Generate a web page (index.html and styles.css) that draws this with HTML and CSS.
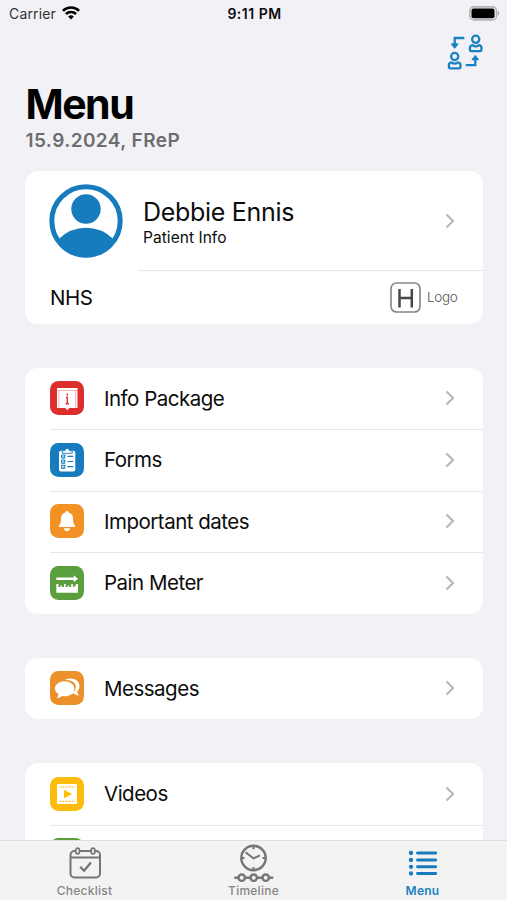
FILE: index.html
```html
<!DOCTYPE html>
<html lang="en">
<head>
    <meta charset="UTF-8">
    <meta name="viewport" content="width=device-width, initial-scale=1.0">
    <title>Menu</title>
    <link rel="stylesheet" href="styles.css">
</head>
<body>
    <div class="status-bar">
        <div class="carrier">
            <span>Carrier</span>
            <svg width="18" height="14" viewBox="0 0 18 14">
                <g fill="none" stroke="#000" stroke-width="2.5">
                    <path d="M.9 4.9a11.5 11.5 0 0 1 16.2 0"/>
                    <path d="M3.9 8a7.2 7.2 0 0 1 10.2 0"/>
                </g>
                <path d="M9 13.6l-2.9-3a4.1 4.1 0 0 1 5.8 0z"/>
            </svg>
        </div>
        <div class="time">9:11 PM</div>
        <div class="battery">
            <svg width="31" height="15" viewBox="0 0 31 15">
                <rect x=".9" y=".9" width="26.6" height="13" rx="4" fill="none" stroke="#b4b4b6" stroke-width="1.6"/>
                <rect x="2.5" y="2.5" width="23" height="9.8" rx="2"/>
                <path d="M28.7 5v4.6c2-.7 2-3.9 0-4.6z" fill="#aaaaac"/>
            </svg>
        </div>
    </div>

    <div class="toolbar">
        <svg width="36" height="36" viewBox="0 0 36 36" fill="none" stroke="#1a82c4" stroke-width="2.3">
            <g id="person">
                <circle cx="28.7" cy="5.3" r="3.6"/>
                <path d="M25.6 11.1c-1.900.3-2.700 1.400-2.700 3v1.500q0 1.500 1.500 1.500h8.600q1.500 0 1.500-1.500v-1.500c0-1.600-.8-2.700-2.700-3q-3.100 2.600-6.200 0z" stroke-linejoin="round"/>
            </g>
            <use href="#person" x="-21" y="17.200"/>
            <path d="M17.300 4H7.700v6"/>
            <path d="M4.800 10.100h5.800l-2.900 3.700z" fill="#1a82c4" stroke-width="1.500" stroke-linejoin="round"/>
            <path d="M18.700 31.200h9.600v-6"/>
            <path d="M25.400 25.600h5.800l-2.900-3.700z" fill="#1a82c4" stroke-width="1.500" stroke-linejoin="round"/>
        </svg>
    </div>

    <div class="heading">
        <h1>Menu</h1>
        <p>15.9.2024, FReP</p>
    </div>

    <div class="content">
        <div class="card">
            <a class="profile">
                <svg class="avatar" width="74" height="74" viewBox="0 0 74 74">
                    <circle cx="37" cy="37" r="34.2" fill="#fff" stroke="#167cbd" stroke-width="5"/>
                    <circle cx="37" cy="25" r="14.7" fill="#167cbd"/>
                    <path d="M10 54.7q11.5-11 27-11t27 11A34 34 0 0 1 37 72 34 34 0 0 1 10 54.7z" fill="#167cbd"/>
                </svg>
                <div class="profile-text">
                    <div class="name">Debbie Ennis</div>
                    <div class="sub">Patient Info</div>
                </div>
                <svg class="chevron" width="10" height="16" viewBox="0 0 10 16"><path d="M1.5 1.5L8 8l-6.5 6.5"/></svg>
            </a>
            <div class="hospital">
                <span class="hospital-name">NHS</span>
                <svg width="31" height="31" viewBox="0 0 31 31">
                    <rect x="1" y="1" width="29" height="29" rx="5.5" fill="none" stroke="#858585" stroke-width="1.6"/>
                    <path d="M9.5 7v18.500M21.800 7v18.500M9.500 16h12.300" stroke="#484848" stroke-width="2.500"/>
                </svg>
                <span class="logo-text">Logo</span>
            </div>
        </div>

        <div class="card">
            <a class="row">
                <svg class="icon red" viewBox="0 0 34 34">
                    <path d="M7 7h20.5v20h-8.2l-2 2.200-2-2.200H7z" fill="#fff"/>
                    <path d="M7 9.500h20.500M8.800 9.500V27M25.700 9.500V27" stroke="#f0918d" stroke-width=".7"/>
                    <path d="M17.300 12.400v2M17.300 16v7M16 16.300h1.600M15.600 22.800h3.400" stroke="#dc2f2c" stroke-width="1.400"/>
                </svg>
                <span class="label">Info Package</span>
                <svg class="chevron" width="10" height="16" viewBox="0 0 10 16"><path d="M1.5 1.5L8 8l-6.5 6.5"/></svg>
            </a>
            <a class="row">
                <svg class="icon blue" viewBox="0 0 34 34">
                    <rect x="9" y="7.8" width="16.3" height="20.7" rx="2" fill="#fff"/>
                    <path d="M12.2 10.3V7.8h2.6q.5-2.400 2.400-2.400t2.400 2.400h2.600v2.500z" fill="#fff" stroke="#167cbd" stroke-width=".9"/>
                    <path d="M17.400 13.400h5.800M17.400 18.500h5.800M17.400 23.700h5.800" stroke="#167cbd" stroke-width="1.200"/>
                    <path d="M11.600 12h3.200v3.200h-3.200zM11.600 17.100h3.200v3.200h-3.200zM11.600 22.200h3.200v3.200h-3.200z" fill="none" stroke="#167cbd"/>
                    <path d="M12.500 13.400l.8.8 2.200-2.600M12.500 18.500l.8.8 2.200-2.600M12.500 23.600l.8.8 2.200-2.600" fill="none" stroke="#167cbd" stroke-width=".8"/>
                </svg>
                <span class="label">Forms</span>
                <svg class="chevron" width="10" height="16" viewBox="0 0 10 16"><path d="M1.5 1.5L8 8l-6.5 6.5"/></svg>
            </a>
            <a class="row">
                <svg class="icon orange" viewBox="0 0 34 34">
                    <path d="M17 7c1 0 1.600.6 1.700 1.600 3 .8 4.300 3.200 4.300 6.200 0 4 .6 5.500 2.200 7q.5 1.300-.8 1.300H9.600q-1.300 0-.8-1.300c1.600-1.500 2.200-3 2.200-7 0-3 1.300-5.400 4.300-6.200C15.400 7.600 16 7 17 7z" fill="#fff"/>
                    <path d="M14 24.300h6q-.4 2.800-3 2.800t-3-2.800z" fill="#fff"/>
                </svg>
                <span class="label">Important dates</span>
                <svg class="chevron" width="10" height="16" viewBox="0 0 10 16"><path d="M1.5 1.5L8 8l-6.5 6.5"/></svg>
            </a>
            <a class="row">
                <svg class="icon green" viewBox="0 0 34 34">
                    <path d="M6.300 11.600h17.500V9.200l4.200 3.600-4.200 3.500v-2.300H6.300z" fill="#fff"/>
                    <path d="M6.300 18h2.200v3h2v-1.500h1.500v1.500h2V18h1.700v3h2v-1.500h1.500v1.500h2V18h1.700v3h1.700v-1.500h1.400V18h2v8.700H6.300z" fill="#fff"/>
                </svg>
                <span class="label">Pain Meter</span>
                <svg class="chevron" width="10" height="16" viewBox="0 0 10 16"><path d="M1.5 1.5L8 8l-6.5 6.5"/></svg>
            </a>
        </div>

        <div class="card">
            <a class="row">
                <svg class="icon amber" viewBox="0 0 34 34">
                    <path d="M15 9c2-1.200 4-1.700 6.200-1.500 5 .3 8.300 3.500 8.300 7.500 0 2.300-.8 4-2.200 5.400.2 1.600.9 2.800 2 4.100-2.300.1-4-.7-5.200-2-1 .3-2 .4-3 .3 3-1.500 4.700-3.700 4.700-6.800 0-4.500-4.400-7.500-10.800-7z" fill="#fff"/>
                    <path d="M14.600 10.200c5.500 0 9.800 3.200 9.800 7.500s-4.300 7.600-9.800 7.600q-1.300 0-2.500-.3c-1.400 1.300-3.100 2-5.500 2 1.300-1.400 1.800-2.700 1.800-4.100-2.200-1.300-3.500-3.100-3.500-5.200 0-4.300 4.200-7.500 9.700-7.500z" fill="#fff"/>
                </svg>
                <span class="label">Messages</span>
                <svg class="chevron" width="10" height="16" viewBox="0 0 10 16"><path d="M1.5 1.5L8 8l-6.5 6.5"/></svg>
            </a>
        </div>

        <div class="card">
            <a class="row">
                <svg class="icon yellow" viewBox="0 0 34 34">
                    <rect x="7" y="7" width="20" height="20" rx="1" fill="#fff"/>
                    <path d="M9.500 9.800h15.500M9.500 24.300h15.500" stroke="#fdbc0c" stroke-width="1.300" stroke-dasharray="1.700 1.300"/>
                    <path d="M14 12.800l8 4.300-8 4.400z" fill="#fdbc0c"/>
                </svg>
                <span class="label">Videos</span>
                <svg class="chevron" width="10" height="16" viewBox="0 0 10 16"><path d="M1.5 1.5L8 8l-6.5 6.5"/></svg>
            </a>
            <a class="row">
                <svg class="icon green" viewBox="0 0 34 34"></svg>
            </a>
        </div>
    </div>

    <div class="tab-bar">
        <a class="tab">
            <svg width="34" height="36" viewBox="0 0 34 36" fill="none" stroke="#757575" stroke-width="2">
                <rect x="2.500" y="5" width="29.500" height="26.500" rx="4"/>
                <path d="M2.500 11.500h29.500"/>
                <path d="M12.200 20.700l3.900 4 6.800-8.200" stroke-width="2.300"/>
                <rect x="7.800" y="2.200" width="3.600" height="5.600" rx="1.800" fill="#f3f3f3" stroke-width="1.700"/>
                <rect x="23.200" y="2.200" width="3.600" height="5.600" rx="1.800" fill="#f3f3f3" stroke-width="1.700"/>
            </svg>
            <span>Checklist</span>
        </a>
        <a class="tab">
            <svg width="40" height="40" viewBox="0 0 40 40" fill="none" stroke="#757575" stroke-width="2.400">
                <circle cx="19.500" cy="14" r="12.200"/>
                <path d="M11.500 8.300l8 6 6.500-3M19.500 2v3.200M19.500 23v3M7.500 14h3M28.500 14h3" stroke-width="2"/>
                <path d="M.3 33.700h4.200M10.900 33.700h5.600M22.900 33.700h5.600M34.900 33.700h4.300"/>
                <circle cx="7.700" cy="33.700" r="3.200"/>
                <circle cx="19.700" cy="33.700" r="3.200"/>
                <circle cx="31.700" cy="33.700" r="3.200"/>
            </svg>
            <span>Timeline</span>
        </a>
        <a class="tab active">
            <svg width="30" height="36" viewBox="0 0 30 36" stroke="#167cbd" stroke-linecap="round">
                <path d="M9.500 7h18.200M9.500 14h18.200M9.500 20.800h18.200M9.500 27.500h18.200" stroke-width="2.900"/>
                <path d="M3 7h.01M3 14h.01M3 20.800h.01M3 27.500h.01" stroke-width="4.300"/>
            </svg>
            <span>Menu</span>
        </a>
    </div>
</body>
</html>
```
FILE: styles.css
```css
* {
    margin: 0;
    padding: 0;
    box-sizing: border-box;
}

body {
    height: 900px;
    display: flex;
    flex-direction: column;
    overflow: hidden;
    background: #f1f1f6;
    color: #0c0c0c;
    font-family: Inter, "Liberation Sans", sans-serif;
}

.status-bar {
    height: 28px;
    padding: 0 7px 2px 9px;
    display: grid;
    grid-template-columns: 1fr auto 1fr;
    align-items: center;
    font-size: 14px;
}

.carrier {
    display: flex;
    align-items: center;
    gap: 6px;
    color: #333;
    letter-spacing: 0.15px;
}

.time {
    font-size: 14px;
    font-weight: 600;
    letter-spacing: 0.5px;
}

.battery {
    display: flex;
    justify-content: flex-end;
}

.toolbar {
    height: 50px;
    padding: 6px 24px 0 0;
    display: flex;
    justify-content: flex-end;
}

.heading {
    height: 92.5px;
    padding: 1px 25.5px 0;
}

h1 {
    font-size: 41px;
    line-height: 50px;
    font-weight: 700;
    letter-spacing: -1.5px;
    color: #000;
}

.heading p {
    margin-top: 1px;
    font-size: 19px;
    line-height: 22px;
    font-weight: 600;
    letter-spacing: 0.42px;
    color: #6d6d70;
}

.content {
    flex: 1;
    min-height: 0;
    overflow: hidden;
    padding: 0 24.5px 0 25px;
}

.card {
    margin-bottom: 44px;
    background: #fff;
    border-radius: 13px;
    overflow: hidden;
}

.profile {
    height: 100.5px;
    padding: 0 27.5px 0 24px;
    display: flex;
    align-items: center;
    background: linear-gradient(#e5e5e7, #e5e5e7) 113px 100% / 100% 1px no-repeat;
}

.profile-text {
    flex: 1;
    margin: 3px 0 0 20px;
}

.name {
    font-size: 25px;
    line-height: 30px;
    letter-spacing: -0.3px;
}

.sub {
    font-size: 15.5px;
    line-height: 21px;
    letter-spacing: 0.05px;
}

.hospital {
    height: 52.5px;
    padding: 0 25px;
    display: flex;
    align-items: center;
}

.hospital-name {
    flex: 1;
    font-size: 20.5px;
    letter-spacing: -0.5px;
}

.logo-text {
    margin-left: 6px;
    font-size: 13.5px;
    font-weight: 300;
    letter-spacing: -0.3px;
    color: #555;
}

.row {
    height: 61.5px;
    padding: 0 27.5px 0 25px;
    display: flex;
    align-items: center;
}

.row + .row {
    background: linear-gradient(#e7e7e9, #e7e7e9) 25px 0 / 100% 1px no-repeat;
}

.icon {
    width: 34px;
    height: 34px;
    border-radius: 8.5px;
}

.red { background: #dc2f2c; }
.blue { background: #167cbd; }
.orange { background: #f29225; }
.green { background: #5a9e3e; }
.amber { background: #ec9029; }
.yellow { background: #fdbc0c; }

.label {
    flex: 1;
    margin-left: 20px;
    font-size: 20.5px;
    letter-spacing: -0.5px;
}

.chevron {
    fill: none;
    stroke: #b9b9bc;
    stroke-width: 2.2;
}

.tab-bar {
    height: 60px;
    padding-top: 3px;
    display: grid;
    grid-template-columns: repeat(3, 1fr);
    background: #f3f3f3;
    border-top: 1px solid #dedee0;
}

.tab {
    display: flex;
    flex-direction: column;
    align-items: center;
    color: #868686;
    font-size: 12px;
    line-height: 14px;
    font-weight: 500;
    letter-spacing: 0.25px;
}

.tab svg {
    height: 40px;
}

.active {
    color: #1a82c4;
    font-weight: 600;
}
```
